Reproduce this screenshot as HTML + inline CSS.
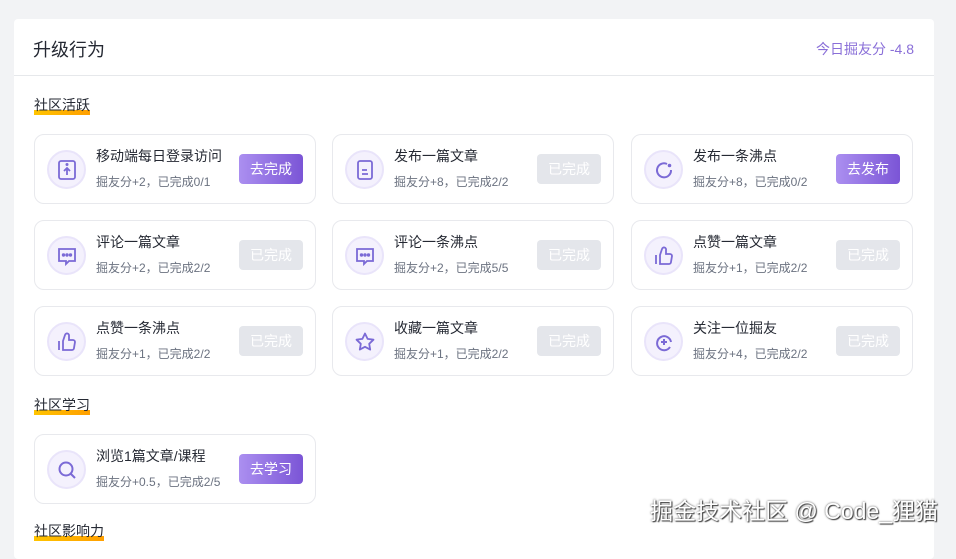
<!DOCTYPE html>
<html><head><meta charset="utf-8"><style>
*{margin:0;padding:0;box-sizing:border-box}
body{width:956px;height:539px;overflow:hidden;background:#f2f3f5;font-family:"Liberation Sans","Noto Sans CJK SC",sans-serif;position:relative}
.panel{position:absolute;left:14px;top:19px;width:920px;height:540px;background:#fff;border-radius:4px}
.hd{height:57px;border-bottom:1px solid #e6e8eb;position:relative}
.hd h1{position:absolute;left:19px;top:17px;font-size:18px;font-weight:normal;color:#252933}
.hd .sc{position:absolute;right:20px;top:20px;font-size:14px;color:#8a6fd8}
.sec{position:absolute;z-index:2;font-size:14px;color:#252933;line-height:18px}
.sec:after{content:"";position:absolute;left:0;right:0;bottom:-1px;height:5px;background:linear-gradient(90deg,#ffc400,#ff9f00);z-index:-1}
.card{position:absolute;width:282px;height:70px;border:1px solid #e8e9ed;border-radius:10px;background:#fff}
.ic{position:absolute;left:12px;top:15px;width:39px;height:39px;border-radius:50%;background:#f4f1fd;border:2px solid #e9e4fa;display:flex;align-items:center;justify-content:center}
.t{position:absolute;left:61px;top:11px;font-size:14px;color:#252933}
.s{position:absolute;left:61px;top:38px;font-size:12px;color:#6b7280}
.b{position:absolute;left:204px;top:19px;width:64px;height:30px;border-radius:4px;font-size:14px;color:#fff;text-align:center;line-height:30px}
.go{background:linear-gradient(90deg,#ab8ff0,#7b55d6)}
.dn{background:#e4e6eb;color:#fff}
.wm{position:absolute;right:18px;top:492px;font-size:23px;color:#fff;text-shadow:0 0 2px #555,1px 1px 1px #333}
</style></head><body>
<div class="panel">
<div class="hd"><h1>升级行为</h1><div class="sc">今日掘友分 -4.8</div></div>
</div>
<div class="sec" style="left:34px;top:96px">社区活跃</div>
<div class="sec" style="left:34px;top:396px">社区学习</div>
<div class="sec" style="left:34px;top:522px">社区影响力</div>

<div class="card" style="left:34px;top:134px"><div class="ic"><svg width="22" height="22" viewBox="0 0 22 22" fill="none" stroke="#7b6ad6" stroke-width="1.8"><rect x="3" y="2" width="16" height="18" rx="2"/><path d="M11 16V10M8 12l3-3 3 3"/><circle cx="11" cy="5.5" r=".6" fill="#7b6ad6"/></svg></div><div class="t">移动端每日登录访问</div><div class="s">掘友分+2，已完成0/1</div><div class="b go">去完成</div></div>
<div class="card" style="left:332px;top:134px"><div class="ic"><svg width="22" height="22" viewBox="0 0 22 22" fill="none" stroke="#7b6ad6" stroke-width="1.8"><rect x="4" y="2" width="14" height="18" rx="2"/><path d="M8 11h5M8 15h6"/></svg></div><div class="t">发布一篇文章</div><div class="s">掘友分+8，已完成2/2</div><div class="b dn">已完成</div></div>
<div class="card" style="left:631px;top:134px"><div class="ic"><svg width="22" height="22" viewBox="0 0 22 22" fill="none" stroke="#7b6ad6" stroke-width="2"><path d="M14 5A7 7 0 1 0 18 11"/><circle cx="16.5" cy="6.5" r=".8" fill="#7b6ad6"/></svg></div><div class="t">发布一条沸点</div><div class="s">掘友分+8，已完成0/2</div><div class="b go">去发布</div></div>

<div class="card" style="left:34px;top:220px"><div class="ic"><svg width="22" height="22" viewBox="0 0 22 22" fill="none" stroke="#7b6ad6" stroke-width="1.8"><path d="M3 4h16v12h-6l-3 3v-3H3z"/><circle cx="7.5" cy="10" r=".8" fill="#7b6ad6"/><circle cx="11" cy="10" r=".8" fill="#7b6ad6"/><circle cx="14.5" cy="10" r=".8" fill="#7b6ad6"/></svg></div><div class="t">评论一篇文章</div><div class="s">掘友分+2，已完成2/2</div><div class="b dn">已完成</div></div>
<div class="card" style="left:332px;top:220px"><div class="ic"><svg width="22" height="22" viewBox="0 0 22 22" fill="none" stroke="#7b6ad6" stroke-width="1.8"><path d="M3 4h16v12h-6l-3 3v-3H3z"/><circle cx="7.5" cy="10" r=".8" fill="#7b6ad6"/><circle cx="11" cy="10" r=".8" fill="#7b6ad6"/><circle cx="14.5" cy="10" r=".8" fill="#7b6ad6"/></svg></div><div class="t">评论一条沸点</div><div class="s">掘友分+2，已完成5/5</div><div class="b dn">已完成</div></div>
<div class="card" style="left:631px;top:220px"><div class="ic"><svg width="22" height="22" viewBox="0 0 22 22" fill="none" stroke="#7b6ad6" stroke-width="1.8"><path d="M3 10v9M7 19h9a2 2 0 0 0 2-2l1-6a2 2 0 0 0-2-2h-4V5a2 2 0 0 0-4-1L7 10z"/></svg></div><div class="t">点赞一篇文章</div><div class="s">掘友分+1，已完成2/2</div><div class="b dn">已完成</div></div>

<div class="card" style="left:34px;top:306px"><div class="ic"><svg width="22" height="22" viewBox="0 0 22 22" fill="none" stroke="#7b6ad6" stroke-width="1.8"><path d="M3 10v9M7 19h9a2 2 0 0 0 2-2l1-6a2 2 0 0 0-2-2h-4V5a2 2 0 0 0-4-1L7 10z"/></svg></div><div class="t">点赞一条沸点</div><div class="s">掘友分+1，已完成2/2</div><div class="b dn">已完成</div></div>
<div class="card" style="left:332px;top:306px"><div class="ic"><svg width="22" height="22" viewBox="0 0 22 22" fill="none" stroke="#7b6ad6" stroke-width="1.8" stroke-linejoin="round"><path d="M11 2.5l2.6 5.4 5.9.8-4.3 4.1 1 5.8L11 15.8l-5.2 2.8 1-5.8-4.3-4.1 5.9-.8z"/></svg></div><div class="t">收藏一篇文章</div><div class="s">掘友分+1，已完成2/2</div><div class="b dn">已完成</div></div>
<div class="card" style="left:631px;top:306px"><div class="ic"><svg width="22" height="22" viewBox="0 0 22 22" fill="none" stroke="#7b6ad6" stroke-width="2"><path d="M17 16A7 7 0 1 1 18 11"/><path d="M11 8v6M8 11h6"/></svg></div><div class="t">关注一位掘友</div><div class="s">掘友分+4，已完成2/2</div><div class="b dn">已完成</div></div>

<div class="card" style="left:34px;top:434px"><div class="ic"><svg width="22" height="22" viewBox="0 0 22 22" fill="none" stroke="#7b6ad6" stroke-width="2"><circle cx="10" cy="10" r="6.5"/><path d="M15 15l4 4"/></svg></div><div class="t">浏览1篇文章/课程</div><div class="s">掘友分+0.5，已完成2/5</div><div class="b go">去学习</div></div>

<div class="wm">掘金技术社区 @ Code_狸猫</div>
</body></html>
